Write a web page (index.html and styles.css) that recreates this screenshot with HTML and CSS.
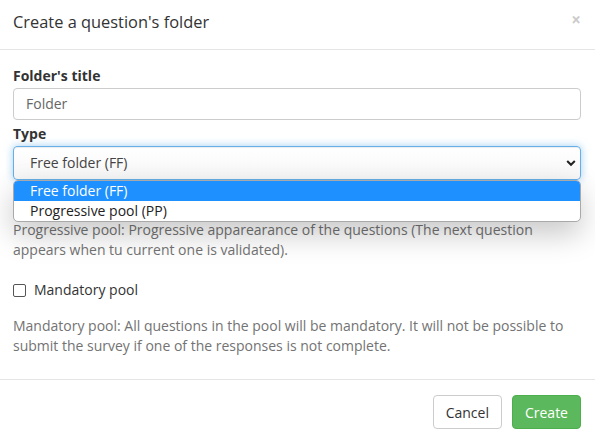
FILE: index.html
```html
<!DOCTYPE html>
<html>
<head>
<meta charset="utf-8">
<link rel="stylesheet" href="styles.css">
</head>
<body>
<div class="modal">
  <div class="modal-header">
    <h4 class="modal-title">Create a question's folder</h4>
    <span class="close">×</span>
  </div>
  <div class="modal-body">
    <div class="form-group">
      <label class="label">Folder's title</label>
      <div class="input">Folder</div>
    </div>
    <div class="form-group type-group">
      <label class="label">Type</label>
      <div class="select">
        <span>Free folder (FF)</span>
        <svg class="chev" width="10" height="8" viewBox="0 0 10 8"><path d="M1.2 2 L5 5.8 L8.8 2" fill="none" stroke="#222" stroke-width="2"/></svg>
      </div>
      <div class="dropdown">
        <div class="opt active">Free folder (FF)</div>
        <div class="opt">Progressive pool (PP)</div>
      </div>
      <p class="help first">Progressive pool: Progressive apparearance of the questions (The next question appears when tu current one is validated).</p>
    </div>
    <div class="checkbox">
      <span class="box"></span>
      <span>Mandatory pool</span>
    </div>
    <p class="help">Mandatory pool: All questions in the pool will be mandatory. It will not be possible to submit the survey if one of the responses is not complete.</p>
  </div>
  <div class="modal-footer">
    <button class="btn btn-default">Cancel</button>
    <button class="btn btn-success">Create</button>
  </div>
</div>
</body>
</html>
```
FILE: styles.css
```css
html, body {
  margin: 0;
  padding: 0;
  background: #fff;
}
body {
  font-family: "Open Sans", "Noto Sans", sans-serif;
  font-size: 14px;
  line-height: 20px;
  color: #333;
}
.modal {
  width: 595px;
  height: 441px;
  overflow: hidden;
}
.modal-header {
  height: 50px;
  border-bottom: 1px solid #e5e5e5;
  display: flex;
  align-items: center;
  justify-content: space-between;
  padding: 0 14px 5px 13px;
  box-sizing: border-box;
}
.modal-title {
  margin: 0;
  font-size: 16.4px;
  font-weight: normal;
  color: #333;
  line-height: 24px;
}
.close {
  font-size: 17px;
  font-weight: bold;
  color: #000;
  opacity: 0.2;
  line-height: 1;
  margin-top: -5px;
}
.modal-body {
  padding: 16px 14px 0 13px;
}
.form-group {
  margin-bottom: 4px;
}
.label {
  display: block;
  font-weight: bold;
  margin-bottom: 2px;
}
.input, .select {
  height: 32px;
  box-sizing: border-box;
  border: 1px solid #ccc;
  border-radius: 4px;
  padding: 0 12px 0 12px;
  display: flex;
  align-items: center;
  color: #555;
}
.input {
  color: #666;
}
.select {
  height: 34px;
  padding-left: 16px;
  border-color: #66afe9;
  box-shadow: inset 0 1px 1px rgba(0,0,0,.075), 0 0 8px rgba(102,175,233,.6);
  justify-content: space-between;
  color: #444;
  padding-right: 4px;
  background: linear-gradient(#fff, #f7f7f7);
}
.type-group {
  position: relative;
  margin-bottom: 0;
}
.dropdown {
  position: absolute;
  left: 0;
  right: 0;
  top: 56px;
  border: 1px solid #a9a9a9;
  border-radius: 5px;
  background: #fff;
  overflow: hidden;
  box-shadow: 0 12px 30px rgba(0,0,0,0.22);
  z-index: 2;
}
.opt {
  height: 20px;
  line-height: 19px;
  padding-left: 16px;
  color: #222;
}
.opt.active {
  background: #1e90ff;
  color: #fff;
}
.help {
  color: #737373;
  margin: 0;
}
.help.first {
  margin-top: 40px;
  margin-bottom: 20px;
}
.checkbox {
  display: flex;
  align-items: center;
  gap: 8px;
  color: #333;
  margin-bottom: 16px;
}
.box {
  width: 11px;
  height: 11px;
  border: 1px solid #555;
  border-radius: 2px;
  background: #fff;
}
.modal-footer {
  margin-top: 23px;
  border-top: 1px solid #e5e5e5;
  padding: 15px 14px 15px 15px;
  display: flex;
  justify-content: flex-end;
  gap: 10px;
}
.btn {
  font-family: inherit;
  font-size: 14px;
  height: 34px;
  padding: 0 12px;
  border-radius: 4px;
  border: 1px solid #ccc;
  background: #fff;
  color: #333;
}
.btn-success {
  background: #5cb85c;
  border-color: #4cae4c;
  color: #fff;
}
```
